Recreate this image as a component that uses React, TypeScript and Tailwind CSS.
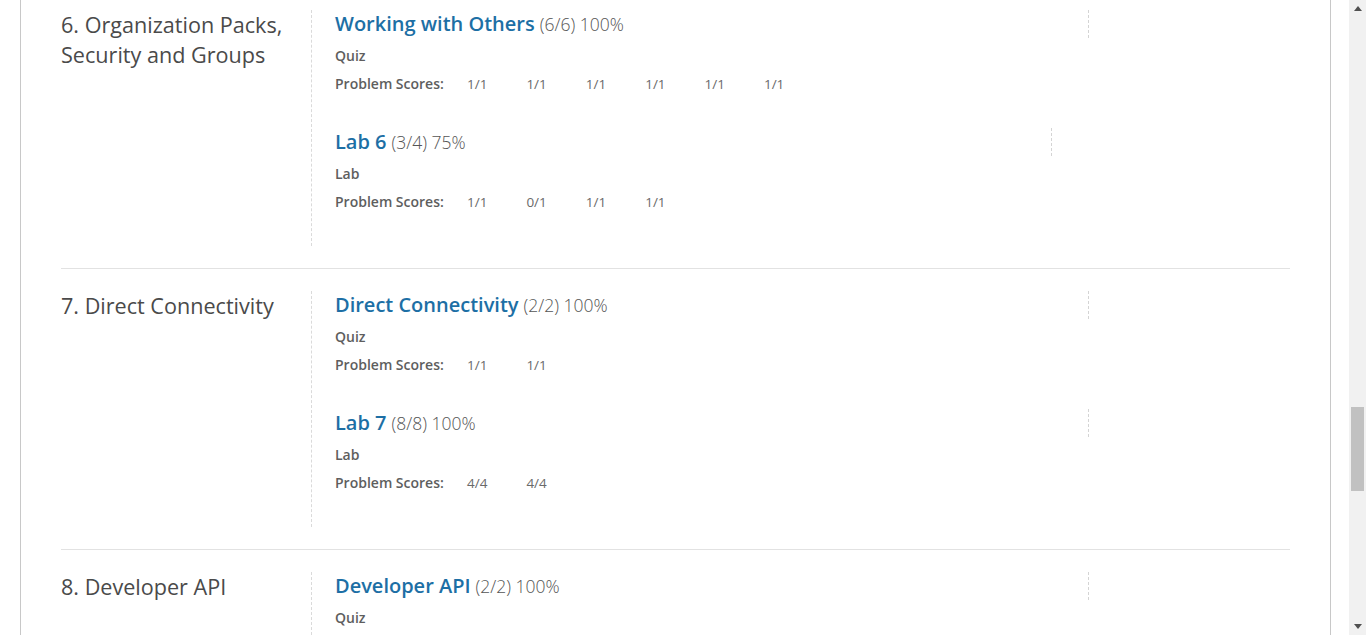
const chapters = [
  {
    title: "6. Organization Packs, Security and Groups",
    sections: [
      { name: "Working with Others", score: "(6/6) 100%", kind: "Quiz", scores: ["1/1", "1/1", "1/1", "1/1", "1/1", "1/1"], mark: "w-[754px]" },
      { name: "Lab 6", score: "(3/4) 75%", kind: "Lab", scores: ["1/1", "0/1", "1/1", "1/1"], mark: "w-[717px]" },
    ],
  },
  {
    title: "7. Direct Connectivity",
    sections: [
      { name: "Direct Connectivity", score: "(2/2) 100%", kind: "Quiz", scores: ["1/1", "1/1"], mark: "w-[754px]" },
      { name: "Lab 7", score: "(8/8) 100%", kind: "Lab", scores: ["4/4", "4/4"], mark: "w-[754px]" },
    ],
  },
  {
    title: "8. Developer API",
    sections: [
      { name: "Developer API", score: "(2/2) 100%", kind: "Quiz", scores: ["1/1", "1/1"], mark: "w-[754px]" },
    ],
  },
];

function Section({ s }: { s: (typeof chapters)[number]["sections"][number] }) {
  return (
    <div className="pb-[34px]">
      <div className={`${s.mark} h-[28px] border-r border-dashed border-[#d4d4d4] leading-[28px]`}>
        <span className="text-[20px] font-semibold text-[#1d6fa5]">{s.name}</span>
        <span className="ml-[5px] text-[17.5px] font-light text-[#555]">{s.score}</span>
      </div>
      <p className="mt-2 text-[14px] font-semibold leading-[20px] text-[#5e5e5e]">{s.kind}</p>
      <div className="mt-2 flex text-[14px] leading-[20px]">
        <span className="w-[132px] font-semibold text-[#5e5e5e]">Problem Scores:</span>
        {s.scores.map((sc, i) => (
          <span key={i} className="w-[59.4px] text-[13.5px] text-[#6a6a6a]">
            {sc}
          </span>
        ))}
      </div>
    </div>
  );
}

export default function App() {
  return (
    <div className="flex h-[635px] overflow-hidden bg-white font-['Open_Sans',sans-serif]">
      <div className="flex-1 pl-[20px] pr-[18px]">
        <div className="h-full border-x border-[#c8c8c8] px-[40px]">
          {chapters.map((c, i) => (
            <div
              key={c.title}
              className={`flex border-b border-[#e2e2e2] ${i === 0 ? "pt-[10px]" : "pt-[22px]"} pb-[22px]`}
            >
              <h2 className="w-[250px] pr-4 text-[21.6px] leading-[30px] text-[#4a4a4a]">{c.title}</h2>
              <div className="flex-1 border-l border-dashed border-[#dadada] pl-[23px]">
                {c.sections.map((s) => (
                  <Section key={s.name} s={s} />
                ))}
              </div>
            </div>
          ))}
        </div>
      </div>
      <div className="flex w-[17px] flex-col items-center bg-[#f1f1f1]">
        <div className="flex h-[17px] items-center justify-center">
          <svg width="8" height="5" viewBox="0 0 8 5"><path d="M4 0 8 5H0z" fill="#505050" /></svg>
        </div>
        <div className="mt-[390px] h-[84px] w-[13px] bg-[#c1c1c1]" />
        <div className="flex-1" />
        <div className="flex h-[17px] items-center justify-center">
          <svg width="8" height="5" viewBox="0 0 8 5"><path d="M0 0h8L4 5z" fill="#505050" /></svg>
        </div>
      </div>
    </div>
  );
}
